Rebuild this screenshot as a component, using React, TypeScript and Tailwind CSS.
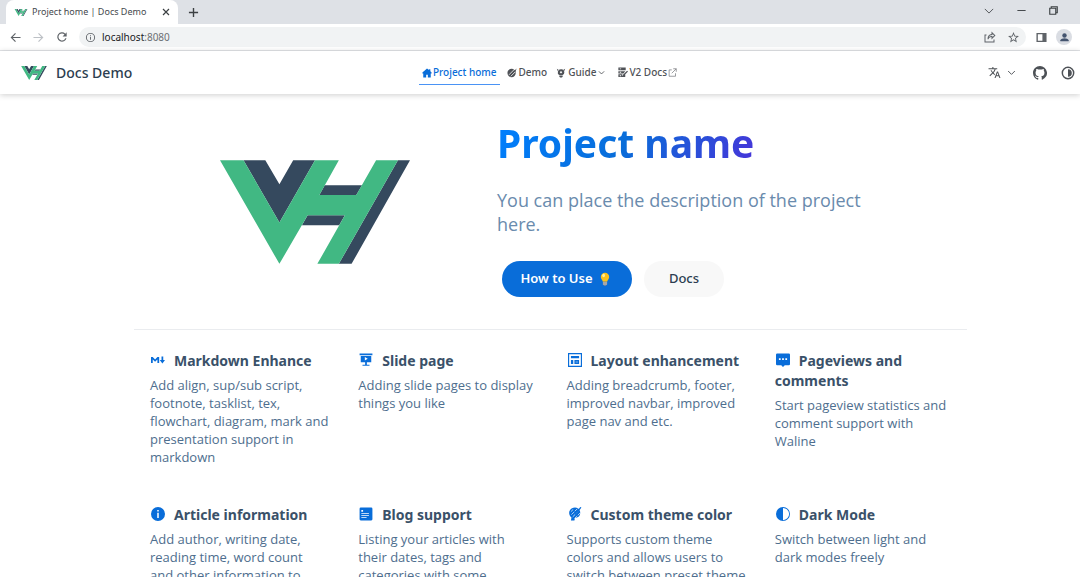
import type { ReactNode } from "react";

type IconProps = { className?: string };

function Logo({ className }: IconProps) {
  return (
    <svg viewBox="62 62 566 309" className={className} role="img" aria-label="VH">
      <path fill="#35495e" d="M132 62h65l42 72 41-72h65L239 248zM374 137h111l-17 29H358zM323 226h111l-17 30H306zM592 62h36L454 371h-38z" />
      <path fill="#41b883" d="M62 62h70l107 186L345 62h71l-58 104h110l59-104h65L416 371h-64l82-145H323l-84 145z" />
    </svg>
  );
}

function Svg({ className, children, box = "0 0 24 24" }: IconProps & { children: ReactNode; box?: string }) {
  return (
    <svg viewBox={box} className={className} aria-hidden="true" fill="currentColor">
      {children}
    </svg>
  );
}

function Line({ className, d, width = 2 }: IconProps & { d: string; width?: number }) {
  return (
    <svg viewBox="0 0 24 24" className={className} aria-hidden="true" fill="none" stroke="currentColor" strokeWidth={width}>
      <path d={d} />
    </svg>
  );
}

const chevron = "M3 8l9 9 9-9";

function Bulb({ className }: IconProps) {
  return (
    <svg viewBox="0 0 14 20" className={className} aria-hidden="true">
      <path fill="#fcc21b" d="M7 1a6 6 0 0 0-6 6c0 3 2.400 4 3 7h6c.6-3 3-4 3-7a6 6 0 0 0-6-6z" />
      <ellipse cx="5" cy="5" rx="2" ry="2.500" fill="#fff0a0" />
      <path fill="#8d8f94" d="M4 14h6v4l-2 1.500H6L4 18z" />
      <path stroke="#d0d2d6" strokeWidth=".8" d="M4 15.500h6M4 17.300h6" />
    </svg>
  );
}

function BrowserBar() {
  return (
    <header className="bg-[#dee1e6]">
      <div className="flex h-6 items-end">
        <div className="ml-[6px] flex h-6 w-[172px] items-center rounded-t-lg bg-white pr-2 pl-2">
          <Logo className="h-[7px] w-[14px]" />
          <span className="ml-1 flex-1 whitespace-nowrap text-[9px] text-[#45494d]">Project home | Docs Demo</span>
          <button aria-label="Close tab" className="text-[#3c4043]">
            <Line className="size-[8px]" width={3.5} d="M3 3l18 18M21 3L3 21" />
          </button>
        </div>
        <button aria-label="New tab" className="ml-[10px] flex h-6 items-center text-[#3c4043]">
          <Line className="size-[11px]" width={3} d="M12 2v20M2 12h20" />
        </button>
        <div className="mr-[22px] ml-auto flex h-6 items-center gap-[23px] pb-[3px] text-[#3c4043]">
          <button aria-label="Search tabs"><Line className="size-[10px]" d="M2 7l10 10L22 7" /></button>
          <button aria-label="Minimize"><Line className="size-[9px]" width={2.5} d="M1 12h22" /></button>
          <button aria-label="Restore">
            <Line className="size-[9px]" width={3} d="M2 6h16v16H2zM6 6V2h16v16h-4" />
          </button>
        </div>
      </div>
      <div className="flex h-[27px] items-center border-b border-[#e3e5e8] bg-white pl-[10px] text-[#5f6368]">
        <button aria-label="Back"><Line className="size-[11px]" width={2.5} d="M23 12H3M12 3l-9 9 9 9" /></button>
        <button aria-label="Forward" className="ml-3 text-[#bdc1c6]"><Line className="size-[11px]" width={2.5} d="M1 12h20M12 3l9 9-9 9" /></button>
        <button aria-label="Reload" className="ml-[11px]">
          <Svg className="size-[14px]"><path d="M17.650 6.350A8 8 0 1 0 19.730 14h-2.080A6 6 0 1 1 12 6c1.660 0 3.140.69 4.220 1.780L13 11h7V4z" /></Svg>
        </button>
        <div className="ml-[10px] flex h-5 flex-1 items-center rounded-full bg-[#f1f3f4] px-[6px]">
          <Svg className="size-[11px]"><path d="M11 17h2v-6h-2zm1-15a10 10 0 1 0 0 20 10 10 0 0 0 0-20zm0 18a8 8 0 1 1 0-16 8 8 0 0 1 0 16zM11 9h2V7h-2z" /></Svg>
          <span className="ml-[6px] flex-1 text-[10px] text-[#6b6f73]"><span className="text-[#202124]">localhost</span>:8080</span>
          <button aria-label="Share">
            <Svg className="size-3"><path d="M9 16.500H7c0-7 3-10 8-10.500V1l8 8-8 8v-5c-3 .2-5 1.500-6 4.500zm8-10.500v1.900c-4 .2-6.500 1.600-7.400 4.500 1.800-1.700 4.200-2.300 7.400-2.300v2L20.200 9zM1 7h4v2H3v12h16v-4h2v6H1z" /></Svg>
          </button>
          <button aria-label="Bookmark" className="ml-[11px]">
            <Svg className="size-[13px]"><path d="M22 9.240l-7.190-.62L12 2 9.190 8.630 2 9.240l5.460 4.730L5.820 21 12 17.270 18.180 21l-1.630-7.030zM12 15.400l-3.760 2.270 1-4.280-3.320-2.880 4.380-.38L12 6.100l1.710 4.040 4.380.38-3.320 2.880 1 4.280z" /></Svg>
          </button>
        </div>
        <button aria-label="Side panel" className="ml-[10px]">
          <Svg className="size-[11px]"><path fillRule="evenodd" d="M1 2h22v20H1zm3 3v14h10V5z" /></Svg>
        </button>
        <button aria-label="Profile" className="mr-2 ml-[9px] flex size-4 items-center justify-center rounded-full bg-[#dadde3] text-[#44546f]">
          <Svg className="size-[11px]"><circle cx="12" cy="7.500" r="4.800" /><path d="M3 20v-2c0-3 6-4.500 9-4.500s9 1.500 9 4.500v2z" /></Svg>
        </button>
      </div>
    </header>
  );
}

function Navbar() {
  return (
    <div className="relative grid h-[43px] shrink-0 grid-cols-[1fr_auto_1fr] items-center bg-white pr-[5px] pl-[21px] shadow-[0_1px_6px_rgba(0,0,0,0.2)]">
      <a href="#" className="flex items-center gap-[9px] text-[14px] font-medium text-[#2c3e50]">
        <Logo className="h-[14px] w-[26px]" />
        Docs Demo
      </a>
      <nav className="flex text-[10px] font-medium text-[#4f5257]">
        <a href="#" className="flex items-center gap-px border-b border-[#4a93f5] px-[3px] pt-[5px] pb-1 text-[#096dd9]">
          <Svg className="size-[10px]"><path d="M12 1L1 11v2h2v10h7v-7h4v7h7V13h2v-2l-3-3V3h-3v2z" /></Svg>
          Project home
        </a>
        <a href="#" className="ml-[7px] flex items-center gap-[2px]">
          <Svg className="size-[10px]">
            <circle cx="11" cy="12" r="10" />
            <path stroke="#fff" strokeWidth="1.800" d="M5 16L18 3M9 20L21 8" />
            <path d="M23 1l-3 9-3-3z" />
          </Svg>
          Demo
        </a>
        <button className="ml-[9px] flex items-center gap-[2px]">
          <Svg className="size-[10px]">
            <path d="M12 3a7.500 7.500 0 0 0-4 14h8a7.500 7.500 0 0 0 4-7 7.500 7.500 0 0 0-8-7zM8 18h8v3l-2 2h-4l-2-2zM2 2l4 2-2 3zM22 2l-4 2 2 3z" />
            <path fill="#fff" d="M12 7l3 3-3 3-3-3z" />
          </Svg>
          <span>Guide</span>
          <Line className="size-[7px]" width={3} d={chevron} />
        </button>
        <a href="#" className="ml-3 flex items-center gap-px">
          <Svg className="size-[11px]">
            <path d="M3 1h16v6H3zM3 9h15l-4 5H3zM3 16h9l-1 3 3-1 4-4v8H3zM22 8l2 2-9 9-3 1 1-3z" />
            <path fill="#fff" d="M6 3h3v2H6zM6 10.500h3v2H6zM6 18h3v2H6z" />
          </Svg>
          <span>V2 Docs</span>
          <Line className="size-[9px] opacity-75" width={2} d="M10 5H3v17h17v-8M14 2h8v8M22 2L10 14" />
        </a>
      </nav>
      <div className="flex items-center justify-end text-[#4d5156]">
        <button aria-label="Language" className="flex items-center gap-[6px]">
          <Svg className="size-[13px]"><path d="M12.870 15.070l-2.540-2.510.03-.03A17.500 17.500 0 0 0 14.070 6H17V4h-7V2H8v2H1v2h11.170A15.700 15.700 0 0 1 9 11.350 15.700 15.700 0 0 1 6.690 8h-2a17.600 17.600 0 0 0 2.980 4.560l-5.090 5.020L4 19l5-5 3.110 3.110zM18.500 10h-2L12 22h2l1.120-3h4.750L21 22h2zm-2.620 7l1.620-4.330L19.120 17z" /></Svg>
          <Line className="size-[9px]" width={2.5} d={chevron} />
        </button>
        <a href="#" aria-label="GitHub" className="ml-[17px]">
          <Svg className="size-[14px]" box="0 0 16 16"><path d="M8 0C3.580 0 0 3.580 0 8c0 3.540 2.290 6.530 5.470 7.590.4.070.55-.17.55-.38 0-.19-.01-.82-.01-1.490-2.010.37-2.530-.49-2.690-.94-.09-.23-.48-.94-.82-1.130-.28-.15-.68-.52-.01-.53.63-.01 1.080.58 1.230.82.72 1.210 1.870.87 2.330.66.070-.52.28-.87.51-1.070-1.780-.2-3.640-.89-3.640-3.950 0-.87.31-1.590.82-2.150-.08-.2-.36-1.020.08-2.120 0 0 .67-.21 2.200.82A7.600 7.600 0 0 1 8 3.860c.68 0 1.360.09 2 .27 1.530-1.040 2.200-.82 2.200-.82.44 1.100.16 1.920.08 2.120.51.56.82 1.270.82 2.150 0 3.070-1.870 3.750-3.650 3.950.29.25.54.73.54 1.480 0 1.070-.01 1.930-.01 2.200 0 .21.15.46.55.38A8 8 0 0 0 8 0z" /></Svg>
        </a>
        <button aria-label="Appearance" className="ml-[14px]">
          <Svg className="size-[14px]"><path fillRule="evenodd" d="M12 1a11 11 0 1 0 0 22 11 11 0 0 0 0-22zm0 2.500a8.500 8.500 0 1 1 0 17 8.500 8.500 0 0 1 0-17z" /><path d="M12 5.500a6.500 6.500 0 0 1 0 13z" /></Svg>
        </button>
      </div>
    </div>
  );
}

function Hero() {
  return (
    <section className="grid grid-cols-[363px_1fr] pt-[23px] pb-[32px]">
      <div className="flex justify-center pt-[43px] pr-[2px]">
        <Logo className="h-[104px] w-[190px]" />
      </div>
      <div>
        <h1 className="w-fit bg-linear-[120deg,#0080ff_0%,#096dd9_50%,#4833d9_100%] bg-clip-text text-[39px] leading-[51px] font-bold text-transparent">Project name</h1>
        <p className="mt-[20px] max-w-[380px] font-['Open_Sans','Noto_Sans',sans-serif] text-[18px] leading-6 font-medium text-[#6a8bad]">You can place the description of the project here.</p>
        <div className="mt-[25px] ml-[5px] flex gap-3 text-[13px] font-medium">
          <a href="#" className="flex h-9 w-[130px] items-center justify-center gap-[7px] rounded-full bg-[#096dd9] pr-1 font-semibold text-white">How to Use <Bulb className="h-[14px] w-[10px]" /></a>
          <a href="#" className="flex h-9 w-20 items-center justify-center rounded-full bg-[#f8f8f8] text-[#2c3e50]">Docs</a>
        </div>
      </div>
    </section>
  );
}

const features: { title: string; text: string; icon: ReactNode }[] = [
  {
    title: "Markdown Enhance",
    text: "Add align, sup/sub script,\nfootnote, tasklist, tex,\nflowchart, diagram, mark and\npresentation support in\nmarkdown",
    icon: <path d="M0 17V7h3l4 4 4-4h3v10h-3v-6l-4 4-4-4v6zM18 6h3v6h3l-4.500 6-4.500-6h3z" />,
  },
  {
    title: "Slide page",
    text: "Adding slide pages to display\nthings you like",
    icon: <path fillRule="evenodd" d="M1 1h22v3H1zM3 5h18v11h-7.500v4H18v2H6v-2h4.500v-4H3zm7 2v6l5-3z" />,
  },
  {
    title: "Layout enhancement",
    text: "Adding breadcrumb, footer,\nimproved navbar, improved\npage nav and etc.",
    icon: <path fillRule="evenodd" d="M0 0h24v24H0zm2 2v20h20V2zM5 5h14v4H5zM5 12h4v7H5zM11 12h8v7h-8zm2 3v1h4v-1z" />,
  },
  {
    title: "Pageviews and comments",
    text: "Start pageview statistics and\ncomment support with\nWaline",
    icon: <path fillRule="evenodd" d="M2 1h20a2 2 0 0 1 2 2v16a2 2 0 0 1-2 2h-7l-3 3-3-3H2a2 2 0 0 1-2-2V3a2 2 0 0 1 2-2zm3 8v3h3V9zm5.500 0v3h3V9zM16 9v3h3V9z" />,
  },
  {
    title: "Article information",
    text: "Add author, writing date,\nreading time, word count\nand other information to\neach article",
    icon: <path fillRule="evenodd" d="M12 0a12 12 0 1 0 0 24 12 12 0 0 0 0-24zm-1.300 5h2.600v2.500h-2.600zm0 5h2.600v9h-2.600z" />,
  },
  {
    title: "Blog support",
    text: "Listing your articles with\ntheir dates, tags and\ncategories with some\nawesome features",
    icon: <path fillRule="evenodd" d="M3 1h18a2 2 0 0 1 2 2v18a2 2 0 0 1-2 2H3a2 2 0 0 1-2-2V3a2 2 0 0 1 2-2zm1 4v3h3V5zM4 10.500V12h13v-1.500zM4 14v1.500h13V14zM4 17.500V19h9v-1.500z" />,
  },
  {
    title: "Custom theme color",
    text: "Supports custom theme\ncolors and allows users to\nswitch between preset theme\ncolors",
    icon: (
      <>
        <path d="M12 1c6 0 9 4 9 9s-3 8-6 8l-3 1-1 4H5l1-5c-3-2-4-5-4-8 0-5 4-9 10-9z" />
        <path stroke="#fff" strokeWidth="1.200" d="M5 8l4-4M6 13L17 2M8 17L22 3M11 20L22 9" strokeDasharray="6 2" />
        <path d="M21 0l2 1-8 11-2-1z" />
      </>
    ),
  },
  {
    title: "Dark Mode",
    text: "Switch between light and\ndark modes freely",
    icon: <path fillRule="evenodd" d="M12 0a12 12 0 1 0 0 24 12 12 0 0 0 0-24zm0 1.500a10.500 10.500 0 0 1 0 21z" />,
  },
];

export default function App() {
  return (
    <div className="flex h-screen flex-col overflow-hidden bg-white font-['Noto_Sans','Open_Sans',sans-serif]">
      <BrowserBar />
      <Navbar />
      <main className="min-h-0 flex-1 overflow-hidden pr-[113px] pl-[134px]">
        <Hero />
        <section className="grid grid-cols-4 gap-y-[39px] border-t border-[#eaecef] pt-[21px]">
          {features.map((f) => (
            <article key={f.title} className="pl-4">
              <h2 className="pr-4 text-[14px] leading-5 font-bold text-[#3a5169]">
                <Svg className="mr-[8px] inline size-4 p-px align-[-2px] text-[#096dd9]">{f.icon}</Svg>
                {f.title}
              </h2>
              <p className="mt-[5px] font-['Open_Sans','Noto_Sans',sans-serif] text-[13px] leading-[18px] font-medium whitespace-pre-line text-[#4e6e8e]">{f.text}</p>
            </article>
          ))}
        </section>
      </main>
    </div>
  );
}
